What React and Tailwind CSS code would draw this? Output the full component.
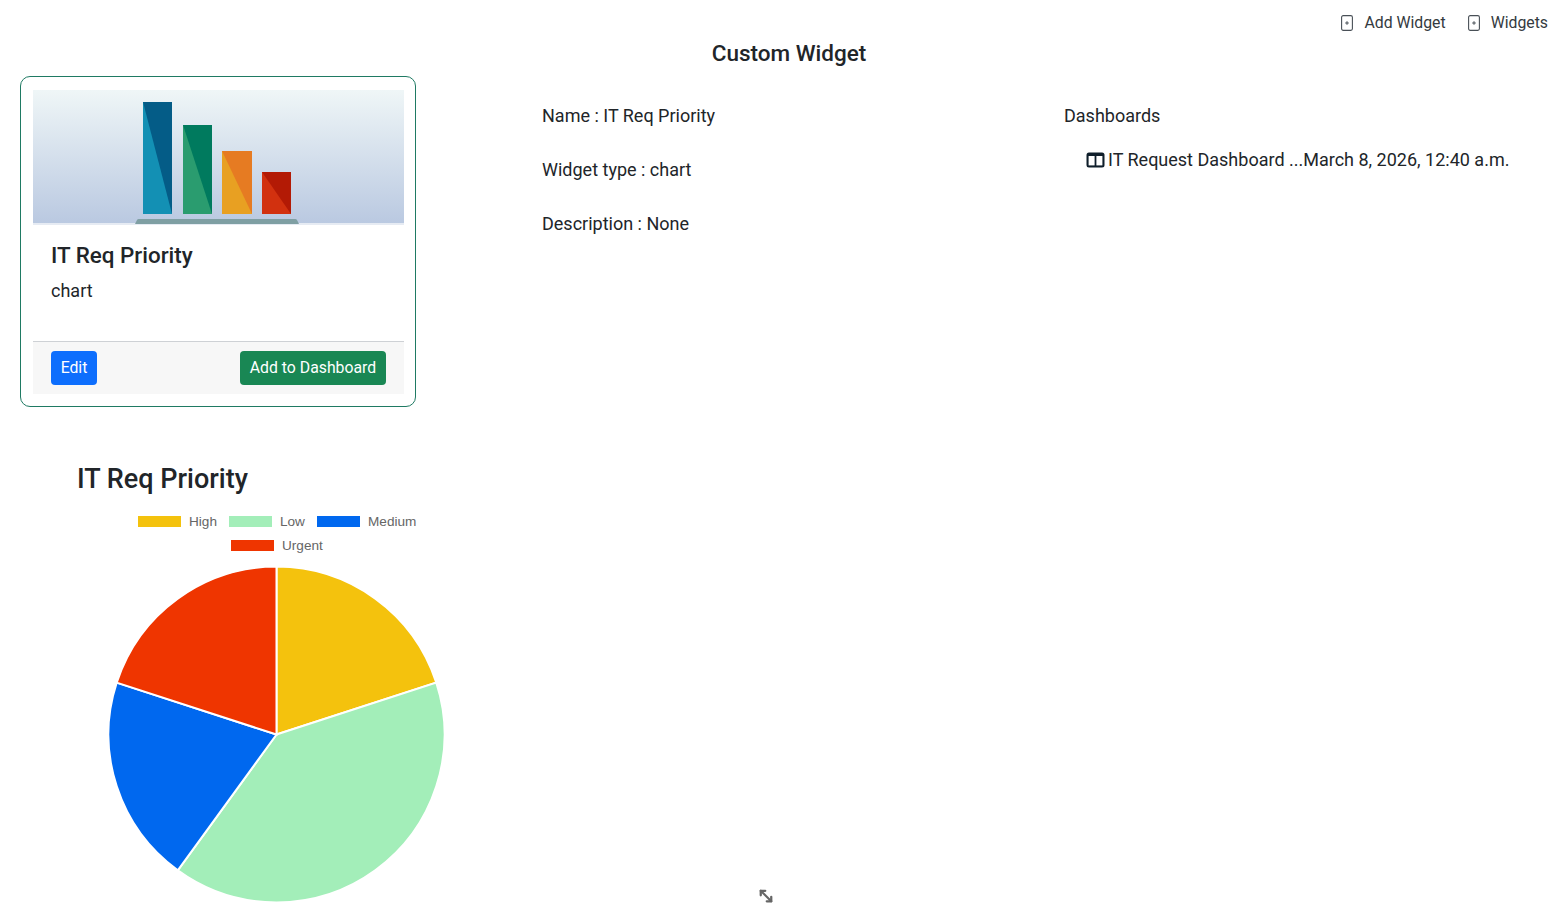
import { MoveDiagonal2 } from "lucide-react";

function FileIcon() {
  return (
    <svg width="12" height="16" viewBox="0 0 12 16" fill="none" className="shrink-0">
      <rect x="0.6" y="0.6" width="10.8" height="14.8" rx="1.6" stroke="#495057" strokeWidth="1.1" />
      <path d="M6 6.2v3.6M4.2 8h3.6" stroke="#495057" strokeWidth="1" />
    </svg>
  );
}

function ChartThumb() {
  const bars = [
    { x: 110, y: 12, w: 29, light: "#1390b4", dark: "#045c87" },
    { x: 150, y: 35, w: 29, light: "#2a9c6f", dark: "#007a5e" },
    { x: 189, y: 61, w: 30, light: "#e8a022", dark: "#e67b22" },
    { x: 229, y: 82, w: 29, light: "#d2310f", dark: "#b31a05" },
  ];
  return (
    <svg width="371" height="136" viewBox="0 0 371 136" className="block">
      <defs>
        <linearGradient id="thumbBg" x1="0" y1="0" x2="0" y2="1">
          <stop offset="0" stopColor="#eff6f7" />
          <stop offset="1" stopColor="#bac9e1" />
        </linearGradient>
      </defs>
      <rect width="371" height="133" fill="url(#thumbBg)" />
      <rect y="133" width="371" height="2" fill="#e6ebf3" />
      {bars.map((b) => (
        <g key={b.x}>
          <rect x={b.x} y={b.y} width={b.w} height={124 - b.y} fill={b.light} />
          <path d={`M${b.x} ${b.y}H${b.x + b.w}V124Z`} fill={b.dark} />
        </g>
      ))}
      <path d="M102 134l2-4a2 2 0 0 1 2-1H262a2 2 0 0 1 2 1l2 4Z" fill="#7f9fa3" />
    </svg>
  );
}

function PieChart() {
  const legend = [
    { x: 38, y: 10, c: "#f4c20d", label: "High" },
    { x: 129, y: 10, c: "#a3eeb9", label: "Low" },
    { x: 217, y: 10, c: "#0068ef", label: "Medium" },
    { x: 131, y: 34, c: "#ef3500", label: "Urgent" },
  ];
  return (
    <svg width="365" height="402" viewBox="0 0 365 402" className="block">
      {legend.map((l) => (
        <g key={l.label}>
          <rect x={l.x} y={l.y - 5} width="43" height="11" fill={l.c} />
          <text x={l.x + 51} y={l.y + 5} fontSize="13.6" fill="#666" fontFamily="'Liberation Sans', sans-serif">
            {l.label}
          </text>
        </g>
      ))}
      <g stroke="#fff" strokeWidth="2" transform="translate(176.5 223.5)">
        <path d="M0 0V-168A168 168 0 0 1 159.8 -51.9Z" fill="#f4c20d" />
        <path d="M0 0L159.8 -51.9A168 168 0 0 1 -98.7 135.9Z" fill="#a3eeb9" />
        <path d="M0 0L-98.7 135.9A168 168 0 0 1 -159.8 -51.9Z" fill="#0068ef" />
        <path d="M0 0L-159.8 -51.9A168 168 0 0 1 0 -168Z" fill="#ef3500" />
      </g>
    </svg>
  );
}

export default function App() {
  return (
    <div className="relative h-[915px] overflow-hidden bg-white font-['Roboto',sans-serif] text-[#212529]">
      <div className="flex justify-end items-center gap-[22px] h-[45px] pr-5 text-[15.8px] text-[#343a40]">
        <span className="flex items-center gap-[11px]"><FileIcon />Add Widget</span>
        <span className="flex items-center gap-[11px]"><FileIcon />Widgets</span>
      </div>
      <h1 className="text-center pl-[10px] h-[31px] leading-[16px] text-[22.5px] font-medium">Custom Widget</h1>

      <div className="flex items-start">
        <div className="ml-5 w-[396px] h-[331px] shrink-0 rounded-[10px] border border-[#1f7a63] pl-3 pr-[11px] pt-[13px] flex flex-col">
          <ChartThumb />
          <div className="px-[18px] pt-[13px] flex-1">
            <h2 className="text-[22.4px] leading-[32px] font-medium">IT Req Priority</h2>
            <p className="mt-[6px] text-[18px] leading-[27px]">chart</p>
          </div>
          <div className="h-[53px] mb-[12px] border-t border-[#ced1d5] bg-[#f7f7f7] px-[18px] flex items-center justify-between">
            <button className="h-[34px] w-[46px] rounded-[4px] bg-[#0d6efd] text-white text-[15.8px]">Edit</button>
            <button className="h-[34px] w-[146px] rounded-[4px] bg-[#198754] text-white text-[15.8px]">Add to Dashboard</button>
          </div>
        </div>

        <div className="ml-[126px] w-[522px] shrink-0 pt-[26px] text-[18px] leading-[27px]">
          <p className="mb-[27px]">Name : IT Req Priority</p>
          <p className="mb-[27px]">Widget type : chart</p>
          <p>Description : None</p>
        </div>

        <div className="pt-[26px] text-[18px] leading-[27px]">
          <p>Dashboards</p>
          <p className="mt-[17px] ml-[22px] flex items-center gap-[3px] whitespace-nowrap">
            <svg width="19" height="16" viewBox="0 0 19 16" className="shrink-0">
              <rect x="0.5" y="0.5" width="18" height="15" rx="2.5" fill="#0f1e2b" />
              <rect x="2.6" y="4" width="6" height="9.4" fill="#fff" />
              <rect x="10.4" y="4" width="6" height="9.4" fill="#fff" />
            </svg>
            <span>IT Request Dashboard ...March 8, 2026, 12:40 a.m.</span>
          </p>
        </div>
      </div>

      <div className="mt-[54px] ml-[77px]">
        <h2 className="h-[36px] text-[27px] leading-[36px] font-medium">IT Req Priority</h2>
      </div>
      <div className="ml-[100px] mt-[14px]">
        <PieChart />
      </div>
      <MoveDiagonal2 className="absolute left-[757px] top-[887px] text-[#666]" size={18} strokeWidth={3} />
    </div>
  );
}
